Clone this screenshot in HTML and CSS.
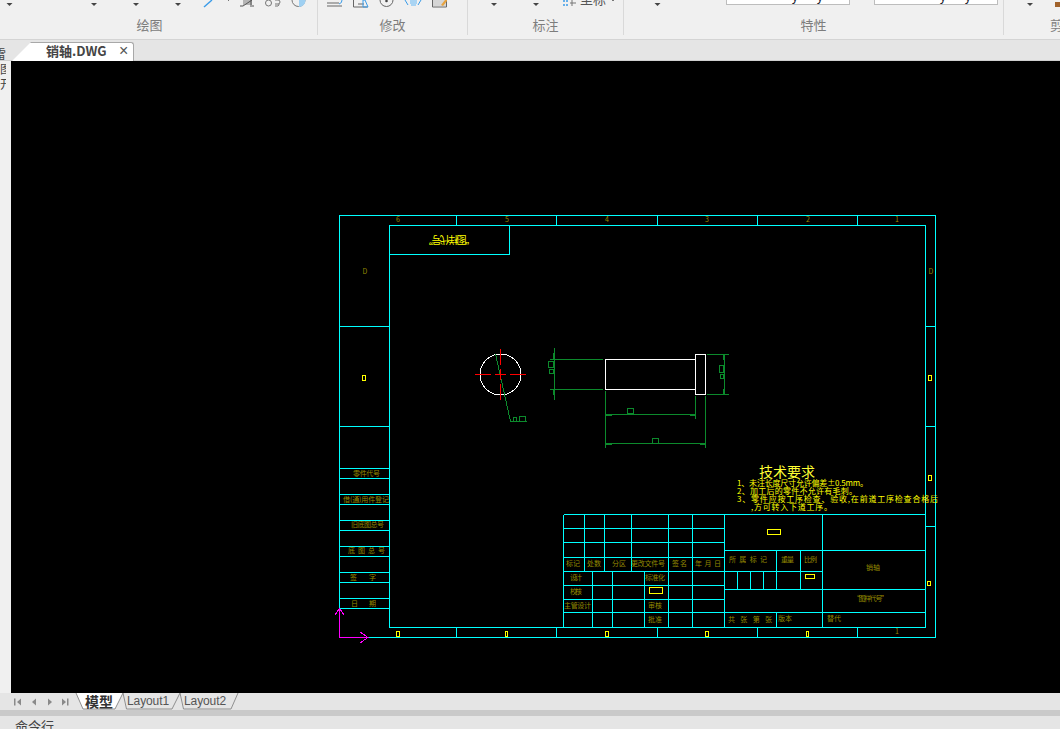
FILE: index.html
```html
<!DOCTYPE html>
<html lang="zh">
<head>
  <meta charset="UTF-8">
  <title>销轴.DWG</title>
  <link rel="stylesheet" href="styles.css">
</head>
<body>

<!-- 功能区,上半部分被截掉了 -->
<div class="ribbon">
  <svg class="ribbon-icons" width="1060" height="12" viewBox="0 0 1060 12">
    <g fill="#444">
      <path d="M6.500 3h6l-3 3z"/><path d="M91 3h6l-3 3z"/><path d="M133 3h6l-3 3z"/><path d="M175 3h6l-3 3z"/>
      <path d="M491 3h6l-3 3z"/><path d="M533 3h6l-3 3z"/><path d="M654.500 3h6l-3 3z"/><path d="M1027 3h6l-3 3z"/>
    </g>
    <path d="M204 7l8-7" stroke="#3a9be8" stroke-width="1.400" fill="none"/>
    <path d="M228 0h1v1h-1z" fill="#777"/>
    <path d="M243 0h9v5h-9z" fill="#b5b5b5"/>
    <path d="M240 6h3M243 6l9-6M252 6h2M251 0v7" stroke="#555" fill="none"/>
    <g fill="none" stroke="#777">
      <circle cx="268.500" cy="3" r="3"/>
      <path d="M275 0h3a2 2 0 0 1 0 4h-3M275 6h3a2 2 0 0 0 1-2"/>
      <circle cx="298.500" cy="0" r="6.500"/>
    </g>
    <path d="M299 -6a6.500 6.500 0 0 1 0 13z" fill="#9fd0f2"/>
    <g fill="none" stroke="#666">
      <path d="M327 3h12M327 6h15"/>
      <path d="M353.500 0v7h14"/>
      <path d="M358 4h6"/>
      <circle cx="386.500" cy="0" r="6.500"/>
      <path d="M432.500 0v7h14v-7"/>
    </g>
    <circle cx="386.500" cy="1" r="1.300" fill="#444"/>
    <path d="M363 0h2l3 7h-5zM342 0a4 4 0 0 1-3 4" fill="none" stroke="#3a9be8"/>
    <path d="M410 0h7v4h-1v2h-5v-2h-1z" fill="#a9d4f3"/>
    <path d="M405 0l3 5M421 0l-3 5" stroke="#3a9be8" fill="none"/>
    <path d="M433 0h13v6h-13z" fill="#d6d6d6"/>
    <path d="M441 5l4-5h2v1l-4 5z" fill="#e7a33e"/>
    <path d="M564 0v2M564 4v2M567 0v2M567 4v2" stroke="#3a9be8" stroke-width="1.500" fill="none"/>
    <path d="M572 0v6M570 3h6" stroke="#777" fill="none"/>
    <text class="clipped-label" x="580" y="4">坐标</text>
    <path d="M612 0h2v1h-2z" fill="#777"/>
    <path d="M1055 2h5v5h-5z" fill="#a0622b"/>
  </svg>
  <div class="combo combo-a"><span>y y</span></div>
  <div class="combo combo-b"><span>y y</span></div>

  <div class="group group-draw">绘图</div>
  <div class="group group-modify">修改</div>
  <div class="group group-note">标注</div>
  <div class="group group-prop">特性</div>
  <div class="group group-clip">剪</div>
</div>

<div class="file-tabs">
  <div class="file-tab">
    <span class="file-name">销轴.DWG</span>
    <span class="file-close">×</span>
  </div>
</div>

<div class="side-label">雷图开</div>

<div class="workspace">
  <div class="side-panel"></div>

  <svg class="canvas" viewBox="11 61 1049 632" width="1049" height="632">
    <!-- 图框 -->
    <path class="cyan" d="M339.500 215.500H935.500V637.500H339.500Z
      M389.500 225.500H925.500V627.500H389.500Z
      M389.500 254.500H509.500V225.500
      M456.500 215.500V225.500M556.500 215.500V225.500M657.500 215.500V225.500M757.500 215.500V225.500M857.500 215.500V225.500
      M456.500 627.500V637.500M556.500 627.500V637.500M657.500 627.500V637.500M757.500 627.500V637.500M857.500 627.500V637.500
      M339.500 326.500H389.500M339.500 426.500H389.500
      M925.500 326.500H935.500M925.500 426.500H935.500M925.500 526.500H935.500
      M339.500 468.500H389.500M339.500 478.500H389.500M339.500 494.500H389.500M339.500 504.500H389.500
      M339.500 520.500H389.500M339.500 530.500H389.500M339.500 546.500H389.500M339.500 556.500H389.500
      M339.500 572.500H389.500M339.500 582.500H389.500M339.500 598.500H389.500M339.500 608.500H389.500"/>
    <!-- 标题栏 -->
    <path class="cyan" d="M563.500 514.500H925.500M563.500 528.500H724.500M563.500 542.500H724.500M563.500 557.500H724.500
      M563.500 571.500H822.500M563.500 585.500H724.500M563.500 599.500H724.500M563.500 612.500H925.500
      M724.500 550.500H925.500M724.500 589.500H925.500
      M563.500 514.500V627.500M584.500 514.500V571.500M604.500 514.500V571.500M631.500 514.500V571.500
      M668.500 514.500V627.500M692.500 514.500V627.500M724.500 514.500V627.500M822.500 514.500V627.500
      M592.500 571.500V627.500M612.500 571.500V627.500M644.500 571.500V627.500
      M776.500 550.500V589.500M776.500 612.500V627.500M800.500 550.500V589.500
      M737.500 571.500V589.500M750.500 571.500V589.500M763.500 571.500V589.500"/>
    <!-- 黄色小方块 -->
    <path class="yellow" d="M362.500 375.500h3v5h-3zM928.500 375.500h3v5h-3zM928.500 475.500h3v5h-3zM927.500 581.500h3v4h-3z
      M396.500 631.500h3v5h-3zM505.500 631.500h2v5h-2zM605.500 631.500h3v5h-3zM705.500 631.500h3v5h-3zM806.500 631.500h2v5h-2z
      M767.500 529.500h13v5h-13zM805.500 574.500h9v4h-9zM649.500 587.500h13v6h-13z"/>
    <!-- 销轴 -->
    <circle class="white" cx="500.500" cy="374.500" r="20.500"/>
    <path class="white" d="M605.500 359.500H695.500V389.500H605.500ZM695.500 354.500H705.500V394.500H695.500Z"/>
    <path class="green" d="M495.500 354L510.500 421.500H526.500M513.500 417.500h3v4h-3zM519.500 416.500h6v5h-6z
      M554.500 348V400M550 359.500H603M550 389.500H603M548.500 361.500h5v6h-5zM549.500 369.500h4v4h-4z
      M707 354.500H729M707 394.500H729M724.500 354.500V394.500M719.500 365.500h4v7h-4zM720.500 374.500h3v4h-3z
      M605.500 391V448M695.500 396V419M705.500 396V448M605.500 414.500H695.500M605.500 443.500H705.500
      M627.500 408.500h6v5h-6zM652.500 438.500h6v5h-6z"/>
    <path class="green-fill" d="M553 353h2v6h-2zM553 390h2v5h-2zM723 355h2v5h-2zM723 389h2v5h-2zM606 414h6v2h-6zM690 414h5v2h-5zM606 443h6v2h-6zM700 443h5v2h-5z"/>
    <path class="red" d="M475 374.500H491M495 374.500H506M510 374.500H526M500.500 349V365M500.500 369V380M500.500 384V400"/>
    <!-- UCS -->
    <path class="magenta" d="M339.500 608.500V637.500H368M334.500 615.500L339.500 608.500L344.500 615.500M360 632L368 637.500L360 643"/>

    <text class="title-flip" transform="rotate(180 449 240)" x="423" y="244" textLength="52">“图样代号”</text>

    <g class="dim">
      <text x="398" y="222" text-anchor="middle">6</text>
      <text x="507" y="222" text-anchor="middle">5</text>
      <text x="607" y="222" text-anchor="middle">4</text>
      <text x="707" y="222" text-anchor="middle">3</text>
      <text x="808" y="222" text-anchor="middle">2</text>
      <text x="897" y="222" text-anchor="middle">1</text>
      <text x="897" y="634" text-anchor="middle">1</text>
      <text x="365" y="274" text-anchor="middle">D</text>
      <text x="931" y="274" text-anchor="middle">D</text>

      <text x="353" y="476" textLength="27">零件代号</text>
      <text x="343" y="502" textLength="46">借(通)用件登记</text>
      <text x="351" y="527" textLength="33">旧底图总号</text>
      <text x="348" y="553" textLength="37">底 图 总 号</text>
      <text x="350" y="580" textLength="26">签    字</text>
      <text x="351" y="606" textLength="25">日    期</text>

      <text x="566" y="566" textLength="14">标记</text>
      <text x="587" y="566" textLength="14">处数</text>
      <text x="612" y="566" textLength="14">分区</text>
      <text x="631" y="566" textLength="34">更改文件号</text>
      <text x="672" y="566" textLength="15">签名</text>
      <text x="695" y="566" textLength="26">年 月 日</text>
      <text x="570" y="580" textLength="12">设计</text>
      <text x="645" y="580" textLength="20">标准化</text>
      <text x="570" y="594" textLength="12">校核</text>
      <text x="564" y="608" textLength="27">主管设计</text>
      <text x="648" y="608" textLength="14">审核</text>
      <text x="648" y="622" textLength="14">批准</text>

      <text x="729" y="562" textLength="38">所 属 标 记</text>
      <text x="781" y="562" textLength="13">重量</text>
      <text x="804" y="562" textLength="13">比例</text>
      <text x="866" y="570" textLength="14">销轴</text>
      <text x="853" y="601" textLength="35">“图样代号”</text>
      <text x="728" y="622" textLength="44">共 张 第 张</text>
      <text x="778" y="621" textLength="14">版本</text>
      <text x="827" y="621" textLength="14">替代</text>
    </g>

    <text class="tech-title" x="759" y="477">技术要求</text>
    <g class="tech">
      <text x="737" y="486" textLength="131">1、未注长度尺寸允许偏差±0.5mm。</text>
      <text x="737" y="494" textLength="120">2、加工后的零件不允许有毛刺。</text>
      <text x="737" y="502" textLength="201">3、零件应按工序检查、验收,在前道工序检查合格后</text>
      <text x="751" y="510" textLength="81">,方可转入下道工序。</text>
    </g>
  </svg>
</div>

<div class="layout-tabs">
  <svg class="layout-nav" width="70" height="17" viewBox="0 0 70 17">
    <g fill="#8a8a8a">
      <path d="M14 5.500h1.500v7H14zM21 5.500v7l-4-3.500z"/>
      <path d="M36 5.500v7l-4-3.500z"/>
      <path d="M48 5.500v7l4-3.500z"/>
      <path d="M62 5.500v7l4-3.500zM67 5.500h1.500v7H67z"/>
    </g>
  </svg>
  <svg class="layout-shapes" width="240" height="17" viewBox="0 0 240 17">
    <path d="M76 0H123L115 16H83Z" fill="#fff"/>
    <path d="M76 0L83 16H115L123 0L126.500 16H172L180 0L183.500 16H231L238 0" fill="none" stroke="#8f8f8f"/>
  </svg>
  <span class="layout-tab layout-model">模型</span>
  <span class="layout-tab layout-one">Layout1</span>
  <span class="layout-tab layout-two">Layout2</span>
</div>
<div class="status-bar"></div>
<div class="command"><span>命令行</span></div>

</body>
</html>
```

FILE: styles.css
```css
* {
  box-sizing: border-box;
}

html, body {
  margin: 0;
  height: 729px;
  overflow: hidden;
}

body {
  position: relative;
  width: 1060px;
  background: #e5e5e5;
  font-family: "Noto Sans CJK SC", "Liberation Sans", sans-serif;
  display: flex;
  flex-direction: column;
}

/* 功能区 */
.ribbon {
  position: relative;
  height: 40px;
  flex: none;
  display: flex;
  background: #f0f0f0;
  border-bottom: 1px solid #d4d4d4;
}

.ribbon-icons {
  position: absolute;
  left: 0;
  top: 0;
}

.clipped-label {
  font-size: 13px;
  fill: #555;
}

.combo {
  position: absolute;
  top: 0;
  width: 124px;
  height: 5px;
  background: #fff;
  border: 1px solid #bdbdbd;
  border-top: none;
  overflow: hidden;
  font-size: 12px;
  line-height: 5px;
  color: #1a2233;
  text-align: right;
  padding-right: 26px;
  word-spacing: 16px;
}

.combo span {
  display: block;
  transform: translateY(-7px);
}

.combo-a {
  left: 726px;
}

.combo-b {
  left: 874px;
}

.group {
  flex: none;
  height: 35px;
  padding-top: 16px;
  text-align: center;
  font-size: 13px;
  line-height: 18px;
  color: #7d7d7d;
  border-right: 1px solid #d9d9d9;
}

.group-draw {
  width: 318px;
  padding-right: 18px;
}

.group-modify {
  width: 150px;
}

.group-note {
  width: 156px;
}

.group-prop {
  width: 380px;
}

.group-clip {
  width: 56px;
  border-right: none;
  text-align: left;
  padding-left: 46px;
  overflow: hidden;
  white-space: nowrap;
}

/* 文件标签 */
.file-tabs {
  height: 21px;
  flex: none;
  position: relative;
  background: #e5e5e5;
  border-bottom: 1px solid #cfcfcf;
}

.file-tab {
  position: absolute;
  left: 12px;
  top: 2px;
  width: 122px;
  height: 19px;
  background: #fff;
  border-top: 1px solid #a8a8a8;
  border-right: 1px solid #a8a8a8;
  border-radius: 0 3px 0 0;
  clip-path: polygon(19px 0, 100% 0, 100% 100%, 0 100%);
  display: flex;
  align-items: center;
  padding-left: 34px;
  padding-bottom: 3px;
  color: #444;
}

.file-name {
  font-size: 13px;
  font-weight: 700;
  width: 73px;
}

.file-close {
  font-size: 16px;
  line-height: 18px;
  font-family: "Liberation Sans", sans-serif;
  color: #555;
}

/* 左侧面板的竖排文字,只露出一半 */
.side-label {
  position: absolute;
  left: 0;
  top: 46px;
  width: 6px;
  height: 44px;
  overflow: hidden;
  font-size: 12px;
  line-height: 15px;
  color: #444;
  text-indent: -6px;
  word-break: break-all;
}

/* 绘图区 */
.workspace {
  height: 632px;
  flex: none;
  display: flex;
}

.side-panel {
  width: 11px;
  flex: none;
  background: #f0f0f0;
}

.canvas {
  display: block;
  flex: none;
  background: #000;
}

.canvas path,
.canvas circle {
  fill: none;
  stroke-width: 1;
}

.cyan,
.yellow,
.white,
.red,
.green,
.magenta {
  shape-rendering: crispEdges;
}

.cyan {
  stroke: #00ffff;
}

.yellow {
  stroke: #ffff00;
}

.white {
  stroke: #fff;
}

.red {
  stroke: #ff0000;
}

.green {
  stroke: #0c8a2c;
}

.canvas .green-fill {
  fill: #0c8a2c;
}

.magenta {
  stroke: #ff00ff;
}

.canvas text {
  font-family: "Noto Sans CJK SC", sans-serif;
}

.dim text {
  font-size: 7px;
  fill: #948800;
}

.title-flip {
  font-size: 10px;
  fill: #ffff00;
}

.tech-title {
  font-size: 14px;
  fill: #ffff33;
}

.tech text {
  font-size: 8px;
  fill: #ffff00;
}

/* 布局标签 */
.layout-tabs {
  height: 17px;
  flex: none;
  position: relative;
  background: #e5e5e5;
}

.layout-nav {
  position: absolute;
  left: 0;
  top: 0;
}

.layout-shapes {
  position: absolute;
  left: 0;
  top: 0;
}

.layout-tab {
  position: absolute;
  top: 0;
  line-height: 16px;
}

.layout-model {
  left: 85px;
  font-size: 14px;
  font-weight: 700;
  color: #333;
}

.layout-one,
.layout-two {
  font-family: "Liberation Sans", sans-serif;
  font-size: 12px;
  letter-spacing: -0.1px;
  color: #555;
}

.layout-one {
  left: 127px;
}

.layout-two {
  left: 184px;
}

.status-bar {
  height: 6px;
  flex: none;
  background: #c9c9c9;
}

.command {
  flex: 1;
  background: #e5e5e5;
  padding-left: 15px;
  padding-top: 1px;
  overflow: hidden;
  font-size: 13px;
  line-height: 18px;
  color: #444;
}
```
